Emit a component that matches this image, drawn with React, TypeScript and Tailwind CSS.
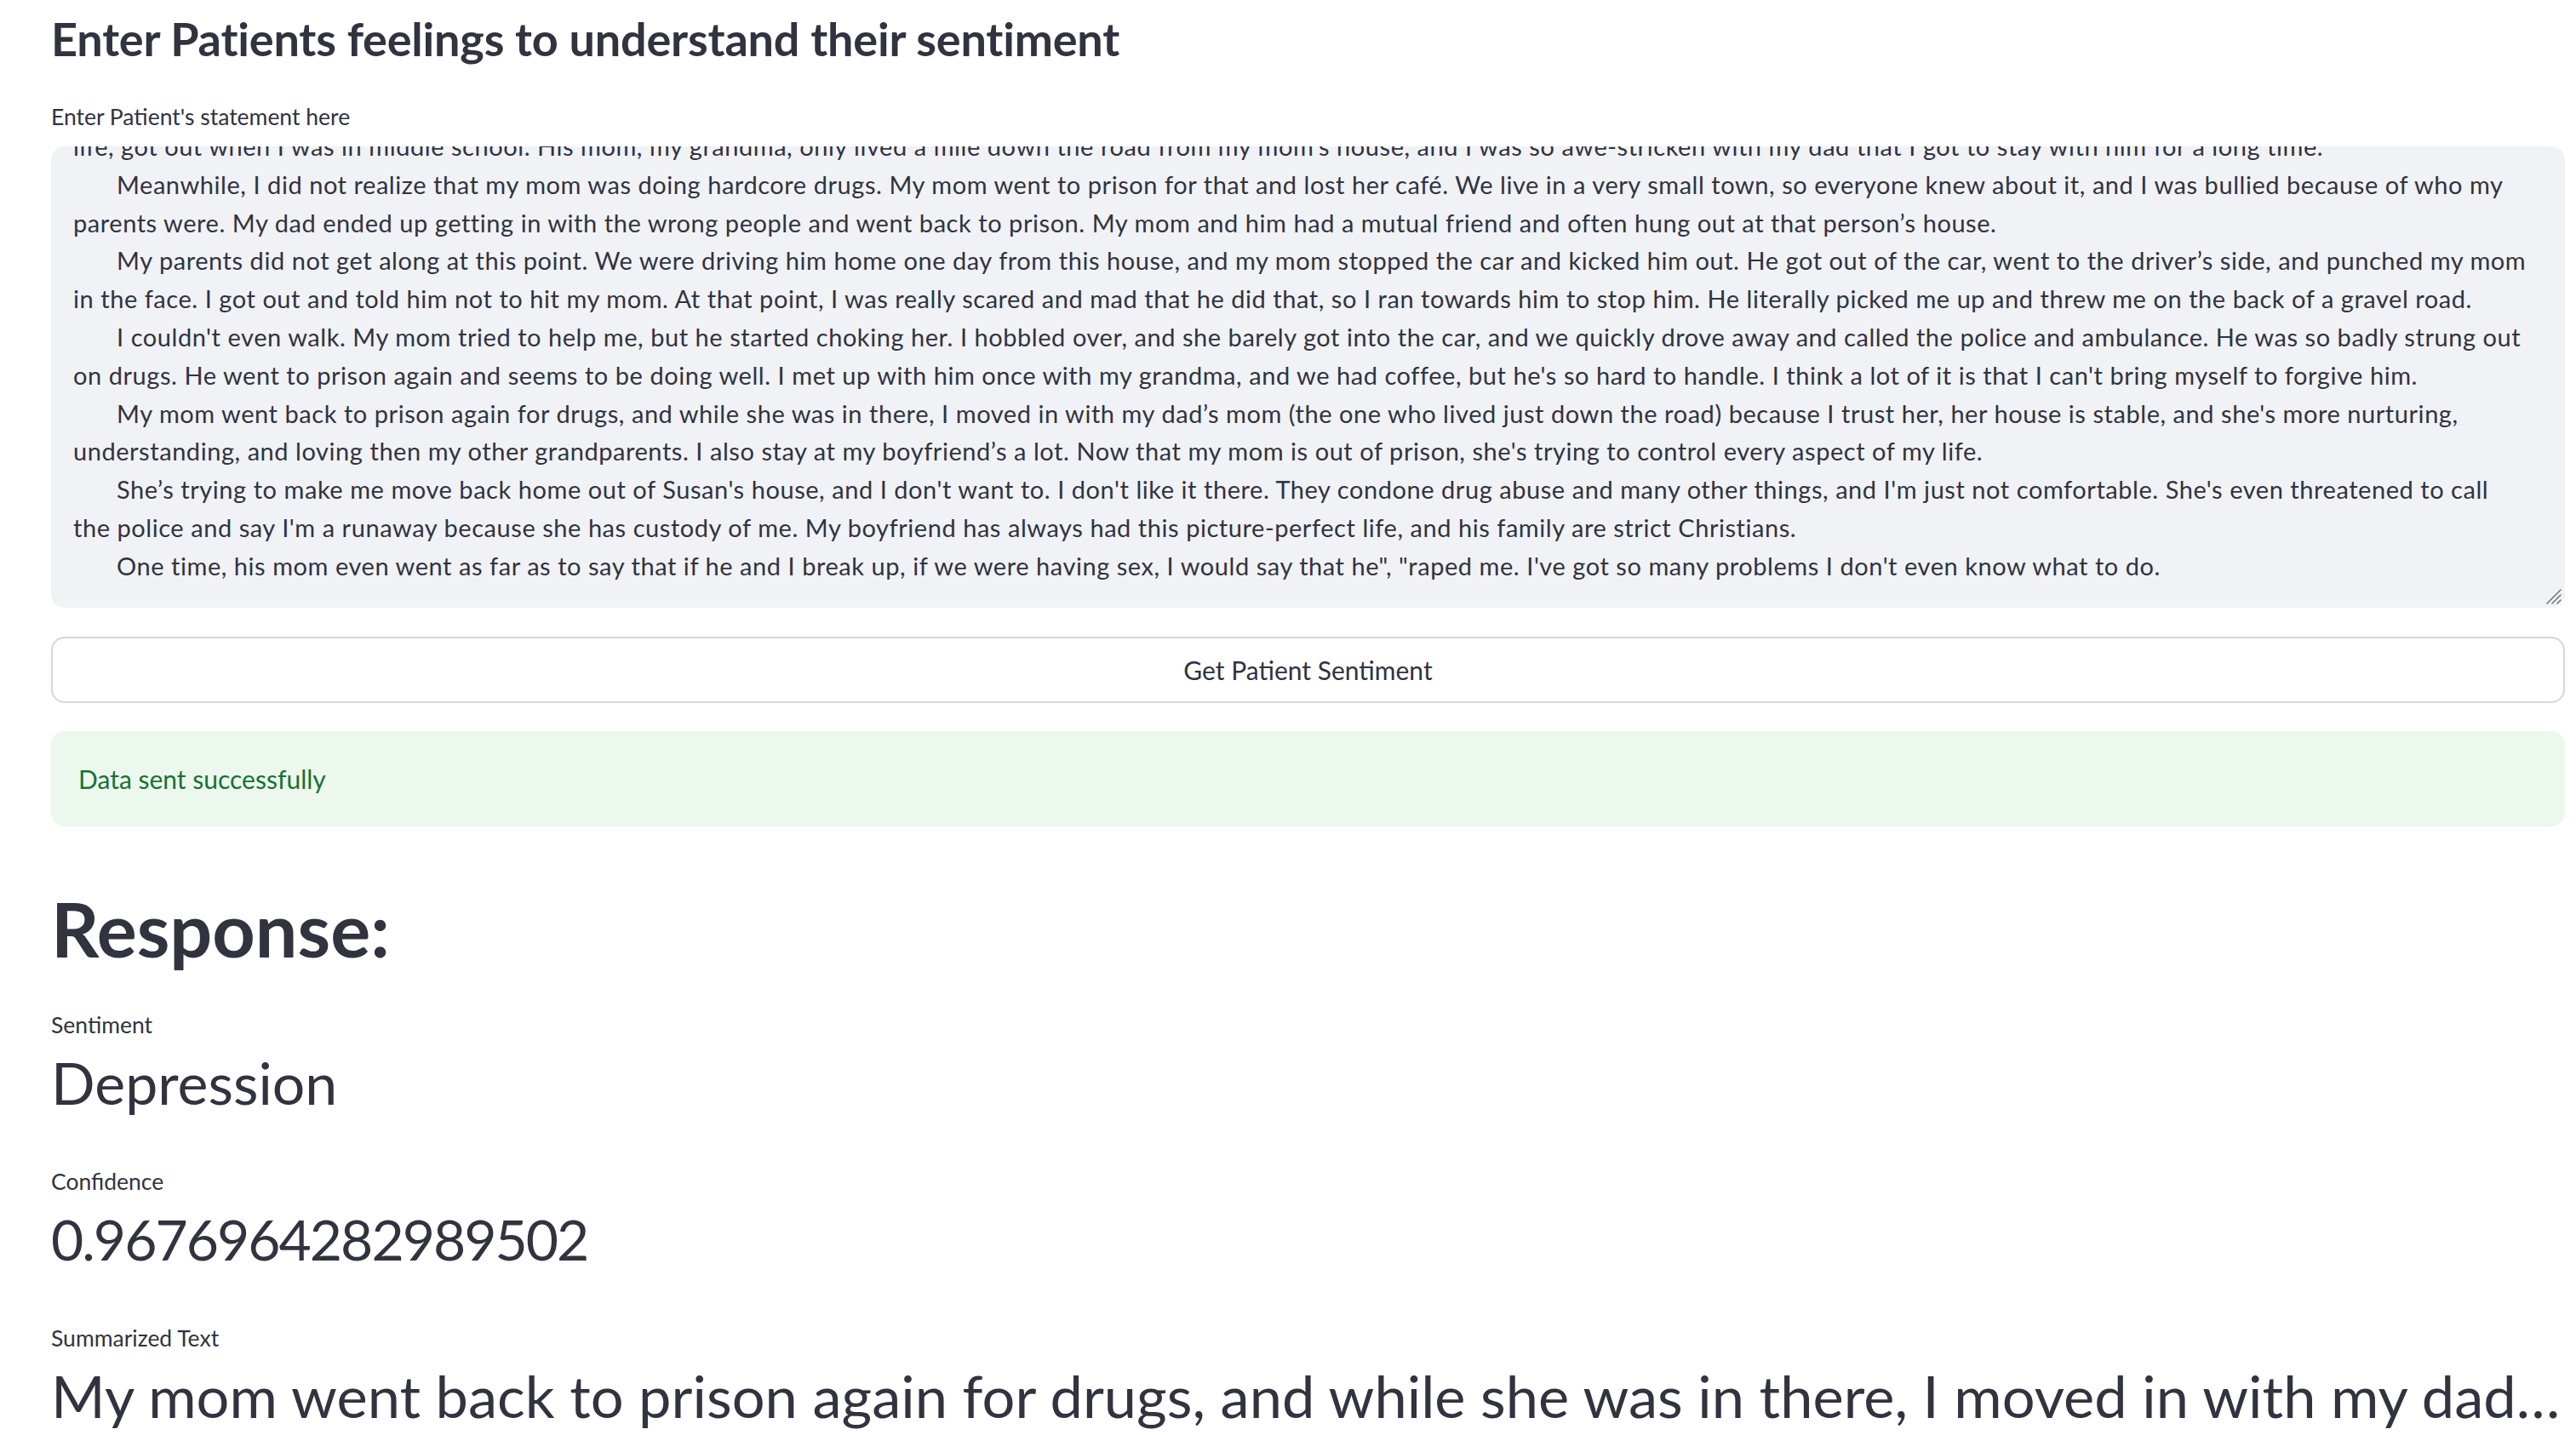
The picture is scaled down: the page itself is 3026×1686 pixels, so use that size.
import React from 'react'

type Line = { text: string; indent?: boolean }

const statementLines: Line[] = [
  {
    text: 'life, got out when I was in middle school. His mom, my grandma, only lived a mile down the road from my mom’s house, and I was so awe-stricken with my dad that I got to stay with him for a long time.',
  },
  {
    indent: true,
    text: 'Meanwhile, I did not realize that my mom was doing hardcore drugs. My mom went to prison for that and lost her café. We live in a very small town, so everyone knew about it, and I was bullied because of who my',
  },
  {
    text: 'parents were. My dad ended up getting in with the wrong people and went back to prison. My mom and him had a mutual friend and often hung out at that person’s house.',
  },
  {
    indent: true,
    text: 'My parents did not get along at this point. We were driving him home one day from this house, and my mom stopped the car and kicked him out. He got out of the car, went to the driver’s side, and punched my mom',
  },
  {
    text: 'in the face. I got out and told him not to hit my mom. At that point, I was really scared and mad that he did that, so I ran towards him to stop him. He literally picked me up and threw me on the back of a gravel road.',
  },
  {
    indent: true,
    text: "I couldn't even walk. My mom tried to help me, but he started choking her. I hobbled over, and she barely got into the car, and we quickly drove away and called the police and ambulance. He was so badly strung out",
  },
  {
    text: "on drugs. He went to prison again and seems to be doing well. I met up with him once with my grandma, and we had coffee, but he's so hard to handle. I think a lot of it is that I can't bring myself to forgive him.",
  },
  {
    indent: true,
    text: "My mom went back to prison again for drugs, and while she was in there, I moved in with my dad’s mom (the one who lived just down the road) because I trust her, her house is stable, and she's more nurturing,",
  },
  {
    text: "understanding, and loving then my other grandparents. I also stay at my boyfriend’s a lot. Now that my mom is out of prison, she's trying to control every aspect of my life.",
  },
  {
    indent: true,
    text: "She’s trying to make me move back home out of Susan's house, and I don't want to. I don't like it there. They condone drug abuse and many other things, and I'm just not comfortable. She's even threatened to call",
  },
  {
    text: "the police and say I'm a runaway because she has custody of me. My boyfriend has always had this picture-perfect life, and his family are strict Christians.",
  },
  {
    indent: true,
    text: 'One time, his mom even went as far as to say that if he and I break up, if we were having sex, I would say that he", "raped me. I\'ve got so many problems I don\'t even know what to do.',
  },
]

const metrics = [
  {
    label: 'Sentiment',
    value: 'Depression',
    valueClass: 'text-[68px]',
  },
  {
    label: 'Confidence',
    value: '0.9676964282989502',
    valueClass: 'text-[66px] tracking-[-2px]',
  },
  {
    label: 'Summarized Text',
    value:
      "My mom went back to prison again for drugs, and while she was in there, I moved in with my dad’s mom (the one who lived just down the road) because I trust her, her house is stable, and she's more nurturing, understanding, and loving then my other grandparents.",
    valueClass: 'text-[68.6px]',
  },
]

function ResizeGrip() {
  return (
    <svg
      className="absolute right-[4px] bottom-[4px]"
      width="20"
      height="20"
      viewBox="0 0 20 20"
    >
      <g stroke="#6b6d75" strokeWidth="1.5" strokeLinecap="round">
        <line x1="19" y1="3" x2="3" y2="19" />
        <line x1="19" y1="9" x2="9" y2="19" />
        <line x1="19" y1="15" x2="15" y2="19" />
      </g>
    </svg>
  )
}

export default function App() {
  return (
    <div
      className="min-h-screen bg-white text-[#31333f] pl-[60px] pr-[13px] pt-[12px] pb-[40px]"
      style={{ fontFamily: 'Lato, "Noto Sans", sans-serif' }}
    >
      <h3 className="text-[54px] leading-[67px] font-bold tracking-[-0.2px]">
        Enter Patients feelings to understand their sentiment
      </h3>

      <label className="block mt-[40px] text-[26.5px] leading-[36px]">
        Enter Patient&apos;s statement here
      </label>

      <div className="relative mt-[17px] h-[542px] rounded-2xl bg-[#f0f2f6] overflow-hidden">
        <div className="-mt-[22px] pl-[26px] pr-[24px] text-[29px] leading-[44.8px] tracking-[0.55px]">
          {statementLines.map((line, i) => (
            <div
              key={i}
              className={
                line.indent
                  ? 'whitespace-nowrap pl-[51px]'
                  : 'whitespace-nowrap'
              }
            >
              {line.text}
            </div>
          ))}
        </div>
        <ResizeGrip />
      </div>

      <button
        type="button"
        className="mt-[34px] flex h-[78px] w-full items-center justify-center rounded-2xl border-2 border-[#d5d6d9] bg-white text-[30px] text-[#31333f]"
      >
        Get Patient Sentiment
      </button>

      <div className="mt-[33px] flex h-[112px] items-center rounded-2xl bg-[#ecf8ee] px-[32px]">
        <p className="text-[30px] leading-[36px] text-[#177233]">
          Data sent successfully
        </p>
      </div>

      <h1 className="mt-[68px] text-[88px] leading-[105.6px] font-bold">
        Response:
      </h1>

      <div className="mt-[44px] flex flex-col gap-[58px]">
        {metrics.map((m) => (
          <div key={m.label} className="flex flex-col gap-[10px]">
            <span className="text-[26.5px] leading-[30px]">{m.label}</span>
            <span
              className={`overflow-hidden text-ellipsis whitespace-nowrap leading-[86px] ${m.valueClass}`}
            >
              {m.value}
            </span>
          </div>
        ))}
      </div>
    </div>
  )
}
